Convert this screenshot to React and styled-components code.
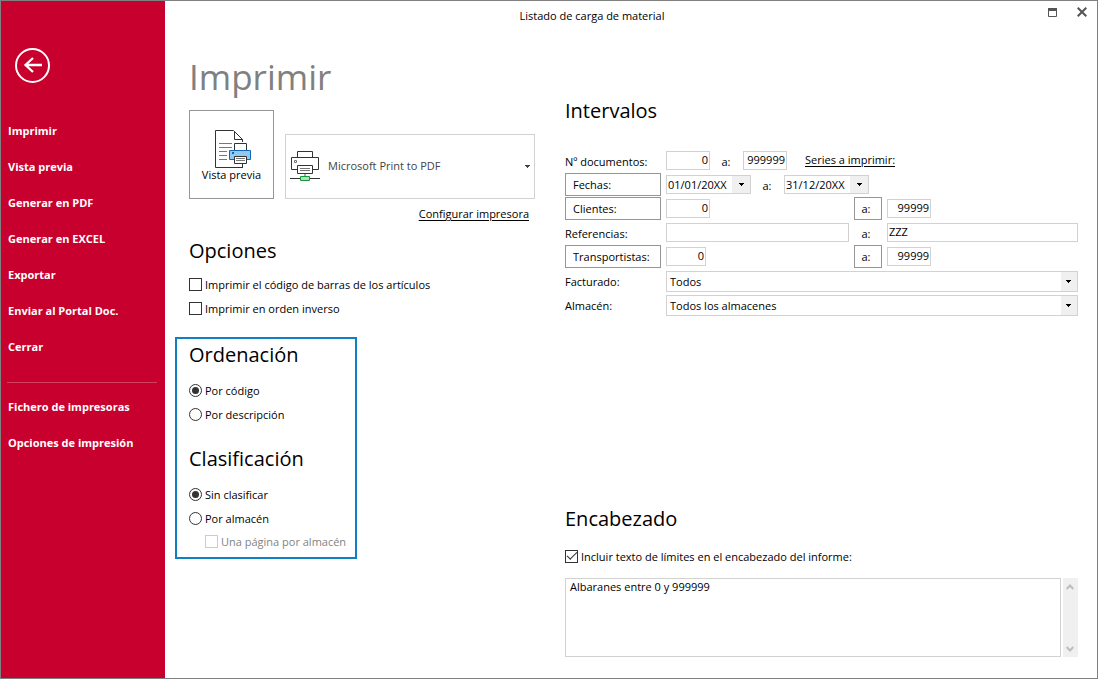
import React from 'react';
import styled, {createGlobalStyle} from 'styled-components';

const GlobalStyle = createGlobalStyle`
    * {
        box-sizing: border-box;
    }

    body {
        margin: 0;
        background: #fff;
        color: #000;
        font-family: "Open Sans", "Noto Sans", sans-serif;
        font-size: 11px;
    }

    button, input, select, textarea {
        font: inherit;
        color: inherit;
        margin: 0;
    }
`
const Window = styled.div`
    display: flex;
    min-height: 100vh;
    border: 1px solid #808080;
`
const Sidebar = styled.aside`
    flex: 0 0 164px;
    padding-top: 47px;
    background: #c8002d;
    color: #fff;
`
const BackButton = styled.button`
    display: block;
    margin-left: 14px;
    padding: 0;
    border: 0;
    background: none;

    svg {
        display: block;
    }
`
const Nav = styled.nav`
    margin-top: 30px;
`
const NavLink = styled.a`
    display: block;
    padding-left: 7px;
    line-height: 36px;
    font-weight: 700;
    color: #fff;
    text-decoration: none;
`
const Divider = styled.hr`
    margin: 17px 8px 6px 6px;
    border: 0;
    border-top: 1px solid #d3405f;
`
const Main = styled.main`
    flex: 1;
    min-width: 0;
    display: flex;
    flex-direction: column;
`
const TitleBar = styled.header`
    display: flex;
    height: 30px;
`
const WindowTitle = styled.div`
    flex: 1;
    text-align: center;
    line-height: 30px;
`
const WindowButtons = styled.div`
    flex: 0 0 78px;
    display: flex;
    justify-content: flex-end;
    padding-right: 9px;
    gap: 18px;
`
const WindowButton = styled.button`
    width: 12px;
    height: 22px;
    padding: 0;
    border: 0;
    background: none;
`
const Columns = styled.div`
    flex: 1;
    display: grid;
    grid-template-columns: 376px minmax(0, 1fr);
    padding: 0 19px 21px 24px;
`
const LeftColumn = styled.div`
    padding-top: 20px;
`
const RightColumn = styled.div`
    display: flex;
    flex-direction: column;
    justify-content: space-between;
    padding-top: 67px;
`
const PageTitle = styled.h1`
    margin: 0 0 7px;
    line-height: 52px;
    font-size: 35px;
    font-weight: 400;
    color: #808080;
`
const Heading = styled.h2`
    margin: 0 0 ${({$gap}) => $gap || 10}px;
    line-height: 26px;
    font-size: 20px;
    font-weight: 400;
`
const PrintRow = styled.div`
    display: flex;
    align-items: flex-end;
    gap: 11px;
`
const PreviewButton = styled.button`
    width: 85px;
    height: 89px;
    padding: 3px 0 0;
    border: 1px solid #969696;
    background: #fff;
    line-height: 14px;

    svg {
        display: block;
        margin-left: 25px;
    }
`
const PrinterBox = styled.div`
    position: relative;
    width: 250px;
    height: 65px;
`
const PrinterSelect = styled.select`
    width: 100%;
    height: 100%;
    padding: 0 20px 2px 42px;
    border: 1px solid #d2d2d2;
    border-radius: 0;
    background: #fff;
    appearance: none;
    color: #444;
`
const PrinterGlyph = styled.span`
    position: absolute;
    top: 17px;
    left: 5px;
    pointer-events: none;
`
const PrinterArrow = styled.span`
    position: absolute;
    top: 0;
    right: 5px;
    height: 100%;
    display: flex;
    align-items: center;
    color: #444;
    pointer-events: none;
`
const ConfigRow = styled.div`
    width: 340px;
    margin-bottom: 12px;
    text-align: right;
    line-height: 24px;
    padding-top: 3px;
`
const TextLink = styled.a`
    color: #000;
    text-underline-offset: 2px;
`
const Section = styled.section`
    margin-bottom: ${({$space}) => $space || 0}px;
`
const Highlight = styled.div`
    width: 182px;
    margin-left: -14px;
    padding: 3px 0 5px 12px;
    border: 2px solid #0f80c1;
`
const Option = styled.label`
    display: flex;
    align-items: center;
    gap: 3px;
    height: ${({$nested}) => ($nested ? 22 : 24)}px;
    padding-left: ${({$nested}) => ($nested ? 16 : 0)}px;
    color: ${({$nested}) => ($nested ? '#838383' : '#000')};
    white-space: nowrap;
`
const Tick = styled.input`
    appearance: none;
    display: grid;
    place-content: center;
    flex: none;
    width: 13px;
    height: 13px;
    border: 1px solid #333;
    border-radius: ${({type}) => (type === 'radio' ? '50%' : '0')};
    background: #fff;

    &:disabled {
        border-color: #ccc;
    }

    &[type='radio']:checked::before {
        content: '';
        width: 7px;
        height: 7px;
        border-radius: 50%;
        background: #333;
    }

    &[type='checkbox']:checked::before {
        content: '';
        width: 9px;
        height: 4px;
        margin-bottom: 3px;
        border-left: 1px solid #333;
        border-bottom: 1px solid #333;
        transform: rotate(-45deg);
    }
`
const Ranges = styled.div`
    display: grid;
    grid-template-columns: 96px minmax(0, 23fr) 28px minmax(0, 24fr);
    grid-auto-rows: 24px;
    column-gap: 5px;
    margin-top: 25px;
`
const FieldLabel = styled.label`
    line-height: 26px;
    text-align: ${({$center}) => ($center ? 'center' : 'left')};
    padding-right: ${({$center}) => ($center ? 4 : 0)}px;
`
const RangeButton = styled.button`
    height: 23px;
    padding: 0 ${({$small}) => ($small ? 4 : 0)}px 0 ${({$small}) => ($small ? 0 : 7)}px;
    border: 1px solid #969696;
    background: #fff;
    text-align: ${({$small}) => ($small ? 'center' : 'left')};
`
const TextInput = styled.input`
    width: ${({$width}) => $width || '100%'};
    height: 19px;
    margin-top: 2px;
    padding: 0 1px 2px;
    border: 1px solid #d2d2d2;
    background: #fff;
    text-align: ${({$right}) => ($right ? 'right' : 'left')};
`
const WideRow = styled.div`
    grid-column: 2 / -1;
    display: flex;
`
const To = styled.span`
    width: 33px;
    padding-right: 1px;
    line-height: 26px;
    text-align: center;
`
const SeriesLink = styled(TextLink)`
    margin-left: 18px;
    line-height: 22px;
`
const Combo = styled.div`
    position: relative;
    width: ${({$width}) => $width || '100%'};
    height: ${({$height}) => $height}px;
    margin-top: 2px;
`
const ComboSelect = styled.select`
    width: 100%;
    height: 100%;
    padding: 0 17px 0 ${({$inset}) => $inset}px;
    border: 1px solid #d2d2d2;
    border-radius: 0;
    background: #fff;
    appearance: none;
`
const ComboArrow = styled.span`
    position: absolute;
    top: 1px;
    right: 1px;
    bottom: 1px;
    width: ${({$wide}) => ($wide ? 18 : 16)}px;
    display: flex;
    align-items: center;
    justify-content: center;
    background: #f0f0f0;
    pointer-events: none;
`
const HeaderText = styled.div`
    display: flex;
    gap: 2px;
    height: 79px;
    margin-top: 10px;
`
const TextArea = styled.textarea`
    flex: 1;
    min-width: 0;
    padding: 0 4px;
    border: 1px solid #d2d2d2;
    line-height: 16px;
    resize: none;
    overflow: hidden;
`
const ScrollTrack = styled.div`
    width: 15px;
    display: flex;
    flex-direction: column;
    justify-content: space-between;
    align-items: center;
    padding: 5px 1px 4px 0;
    background: #f0f0f0;
`

const Arrow = () => (
    <svg width="5" height="3" shapeRendering="crispEdges" aria-hidden="true">
        <path d="M0 0h5v1h-5zM1 1h3v1h-3zM2 2h1v1h-1z" fill="currentColor"/>
    </svg>
);

const Chevron = ({down}) => (
    <svg width="8" height="7" viewBox="0 0 8 7" aria-hidden="true">
        <path d={down ? 'M.7 1L4 4.500L7.300 1' : 'M.7 6L4 2.500L7.300 6'} fill="none" stroke="#bdbdbd" strokeWidth="2"/>
    </svg>
);

const BackIcon = () => (
    <svg width="35" height="35" viewBox="0 0 35 35" fill="none" stroke="#fff" aria-hidden="true">
        <circle cx="17.5" cy="17.5" r="16.5" strokeWidth="2"/>
        <path d="M27 17H10.500M18 10L10.500 17L18 24" strokeWidth="2.300"/>
    </svg>
);

const PreviewIcon = () => (
    <svg width="36" height="38" viewBox="0 0 36 38" fill="none" aria-hidden="true">
        <path d="M.5.5H18.500L27.500 9.500V37.500H.5z" fill="#fff" stroke="#333"/>
        <path d="M19.500 1V9.500H27.500" stroke="#333"/>
        <path d="M4 13.500h13M4 17.500h13M4 21.500h8M4 25.500h8M4 29.500h8" stroke="#777"/>
        <path d="M13 19h5v-7h15v7h3v12h-3v4H18v-4h-5z" fill="#fff"/>
        <path d="M27.500 34v3.500H13" stroke="#333"/>
        <path d="M19.500 13.500h12v7h-12z" fill="#fff" stroke="#333"/>
        <path d="M14.500 20.500h21v9h-21z" fill="#91c9f0" stroke="#1067b8"/>
        <path d="M17 22h2v2h-2z" fill="#1067b8"/>
        <path d="M19.500 26.500h12v7h-12z" fill="#fff" stroke="#333"/>
        <path d="M21 28.500h9M21 30.500h9" stroke="#777"/>
    </svg>
);

const PrinterIcon = () => (
    <svg width="30" height="31" viewBox="0 0 30 31" fill="none" aria-hidden="true">
        <path d="M7.500.5h15v6h-15z" fill="#fff" stroke="#333"/>
        <path d="M1.500 6.500h27v12h-27z" fill="#fff" stroke="#333"/>
        <path d="M4.500 9.500h2v2h-2z" stroke="#777"/>
        <path d="M7.500 14.500h15v8h-15z" fill="#fff" stroke="#333"/>
        <path d="M10 17.500h10M10 19.500h10" stroke="#777"/>
        <path d="M15 23v2" stroke="#aaa" strokeWidth="2"/>
        <path d="M0 27.500h30" stroke="#333"/>
        <path d="M10.500 25.500h9v4h-9z" fill="#b5dfb9" stroke="#12963f"/>
    </svg>
);

const ComboBox = ({id, label, value, date}) => (
    <Combo $width={date && '85px'} $height={date ? 19 : 21}>
        <ComboSelect id={id} aria-label={label} $inset={date ? 1 : 3}>
            <option>{value}</option>
        </ComboSelect>
        <ComboArrow $wide={date}><Arrow/></ComboArrow>
    </Combo>
);

const actions = ['Imprimir', 'Vista previa', 'Generar en PDF', 'Generar en EXCEL', 'Exportar', 'Enviar al Portal Doc.', 'Cerrar'];
const settings = ['Fichero de impresoras', 'Opciones de impresión'];

const App = () => {
    return (
        <Window>
            <GlobalStyle/>
            <Sidebar>
                <BackButton aria-label="Volver"><BackIcon/></BackButton>
                <Nav>
                    {actions.map((item) => <NavLink href="#" key={item}>{item}</NavLink>)}
                    <Divider/>
                    {settings.map((item) => <NavLink href="#" key={item}>{item}</NavLink>)}
                </Nav>
            </Sidebar>
            <Main>
                <TitleBar>
                    <WindowTitle>Listado de carga de material</WindowTitle>
                    <WindowButtons>
                        <WindowButton aria-label="Maximizar">
                            <svg width="9" height="9" viewBox="0 0 9 9" fill="none" aria-hidden="true">
                                <path d="M.5.5h8v8h-8z" stroke="#555"/>
                                <path d="M0 0h9v3H0z" fill="#555"/>
                            </svg>
                        </WindowButton>
                        <WindowButton aria-label="Cerrar">
                            <svg width="10" height="10" viewBox="0 0 10 10" aria-hidden="true">
                                <path d="M.7.7l8.600 8.600M9.300.7L.7 9.300" stroke="#555" strokeWidth="2"/>
                            </svg>
                        </WindowButton>
                    </WindowButtons>
                </TitleBar>
                <Columns>
                    <LeftColumn>
                        <PageTitle>Imprimir</PageTitle>
                        <PrintRow>
                            <PreviewButton>
                                <PreviewIcon/>
                                Vista previa
                            </PreviewButton>
                            <PrinterBox>
                                <PrinterSelect aria-label="Impresora">
                                    <option>Microsoft Print to PDF</option>
                                </PrinterSelect>
                                <PrinterGlyph><PrinterIcon/></PrinterGlyph>
                                <PrinterArrow><Arrow/></PrinterArrow>
                            </PrinterBox>
                        </PrintRow>
                        <ConfigRow>
                            <TextLink href="#">Configurar impresora</TextLink>
                        </ConfigRow>
                        <Section $space={17}>
                            <Heading $gap={8}>Opciones</Heading>
                            <Option><Tick type="checkbox"/>Imprimir el código de barras de los artículos</Option>
                            <Option><Tick type="checkbox"/>Imprimir en orden inverso</Option>
                        </Section>
                        <Highlight>
                            <Section $space={20}>
                                <Heading>Ordenación</Heading>
                                <Option><Tick type="radio" name="orden" defaultChecked/>Por código</Option>
                                <Option><Tick type="radio" name="orden"/>Por descripción</Option>
                            </Section>
                            <Section>
                                <Heading>Clasificación</Heading>
                                <Option><Tick type="radio" name="clase" defaultChecked/>Sin clasificar</Option>
                                <Option><Tick type="radio" name="clase"/>Por almacén</Option>
                                <Option $nested><Tick type="checkbox" disabled/>Una página por almacén</Option>
                            </Section>
                        </Highlight>
                    </LeftColumn>
                    <RightColumn>
                        <Section>
                            <Heading>Intervalos</Heading>
                            <Ranges>
                                <FieldLabel htmlFor="doc-desde">Nº documentos:</FieldLabel>
                                <WideRow>
                                    <TextInput id="doc-desde" $width="44px" $right defaultValue="0"/>
                                    <To>a:</To>
                                    <TextInput aria-label="Documento final" $width="44px" $right defaultValue="999999"/>
                                    <SeriesLink href="#">Series a imprimir:</SeriesLink>
                                </WideRow>
                                <RangeButton>Fechas:</RangeButton>
                                <WideRow>
                                    <ComboBox label="Fecha inicial" value="01/01/20XX" date/>
                                    <To>a:</To>
                                    <ComboBox label="Fecha final" value="31/12/20XX" date/>
                                </WideRow>
                                <RangeButton>Clientes:</RangeButton>
                                <TextInput aria-label="Cliente inicial" $width="44px" $right defaultValue="0"/>
                                <RangeButton $small>a:</RangeButton>
                                <TextInput aria-label="Cliente final" $width="44px" $right defaultValue="99999"/>
                                <FieldLabel htmlFor="ref-desde">Referencias:</FieldLabel>
                                <TextInput id="ref-desde"/>
                                <FieldLabel htmlFor="ref-hasta" $center>a:</FieldLabel>
                                <TextInput id="ref-hasta" defaultValue="ZZZ"/>
                                <RangeButton>Transportistas:</RangeButton>
                                <TextInput aria-label="Transportista inicial" $width="40px" $right defaultValue="0"/>
                                <RangeButton $small>a:</RangeButton>
                                <TextInput aria-label="Transportista final" $width="44px" $right defaultValue="99999"/>
                                <FieldLabel htmlFor="facturado">Facturado:</FieldLabel>
                                <WideRow><ComboBox id="facturado" value="Todos"/></WideRow>
                                <FieldLabel htmlFor="almacen">Almacén:</FieldLabel>
                                <WideRow><ComboBox id="almacen" value="Todos los almacenes"/></WideRow>
                            </Ranges>
                        </Section>
                        <Section>
                            <Heading $gap={12}>Encabezado</Heading>
                            <Option>
                                <Tick type="checkbox" defaultChecked/>
                                Incluir texto de límites en el encabezado del informe:
                            </Option>
                            <HeaderText>
                                <TextArea aria-label="Texto del encabezado" defaultValue="Albaranes entre 0 y 999999"/>
                                <ScrollTrack>
                                    <Chevron/>
                                    <Chevron down/>
                                </ScrollTrack>
                            </HeaderText>
                        </Section>
                    </RightColumn>
                </Columns>
            </Main>
        </Window>
    );
};

export default App;
